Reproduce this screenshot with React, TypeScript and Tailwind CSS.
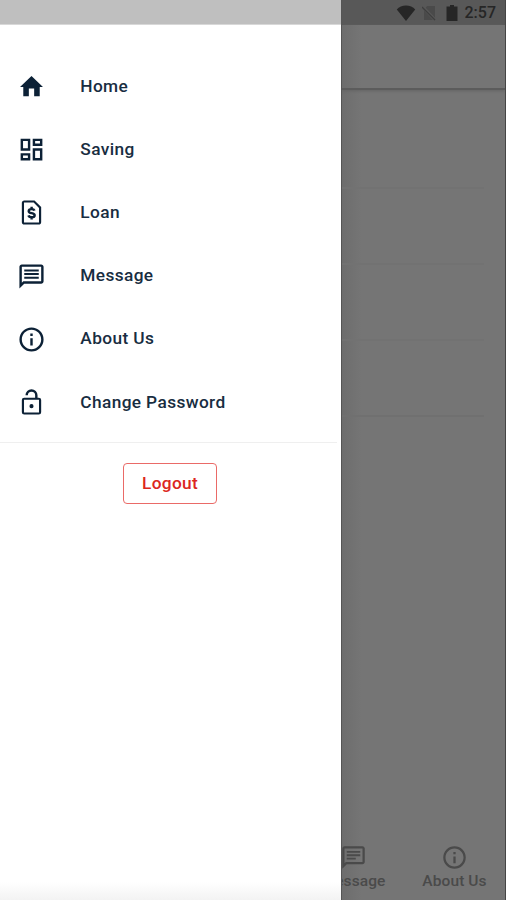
import type { ReactNode } from "react";

function Icon({ children, className }: { children: ReactNode; className: string }) {
  return (
    <svg viewBox="0 0 24 24" fill="currentColor" className={className}>
      {children}
    </svg>
  );
}

const home = <path d="M9.800 20v-6.300h4.400V20h4.600v-7.500h2.700L12 3.300l-9.500 9.200h2.700V20z" />;
const dashboard = (
  <path d="M19 5v2h-4V5h4M9 5v6H5V5h4m10 8v6h-4v-6h4M9 17v2H5v-2h4M21 3h-8v6h8V3M11 3H3v10h8V3m10 8h-8v10h8V11m-10 4H3v6h8v-6z" />
);
const loan = (
  <>
    <path d="M14.500 2H6c-1.100 0-2 .9-2 2v16c0 1.100.9 2 2 2h12c1.100 0 2-.9 2-2V7.500L14.500 2zM18.200 20.200H5.800V3.800h8L18.200 8.300v11.900z" />
    <path
      d="M14.500 10.500c-.3-.9-1.200-1.300-2.400-1.300-1.400 0-2.400.6-2.400 1.700 0 2.300 4.900 1 4.900 3.300 0 1.100-1 1.700-2.500 1.700-1.300 0-2.300-.5-2.600-1.500M12.100 7.300v1.900m0 6.600v1.900"
      fill="none"
      stroke="currentColor"
      strokeWidth="2"
    />
  </>
);
const message = (
  <path d="M20 2H4c-1.100 0-2 .9-2 2v18l4-4h14c1.100 0 2-.9 2-2V4c0-1.100-.9-2-2-2zm0 14H5.200L4 17.200V4h16v12zM6 12.200h12v1.600H6v-1.600zm0-3h12v1.600H6V9.200zm0-3h12v1.600H6V6.200z" />
);
const chat = (
  <path d="M20 2H4c-1.100 0-2 .9-2 2v18l4-4h14c1.100 0 2-.9 2-2V4c0-1.100-.9-2-2-2zm0 14H5.200L4 17.200V4h16v12zM6 12.200h8v1.600H6v-1.600zm0-3h12v1.600H6V9.200zm0-3h12v1.600H6V6.200z" />
);
const info = (
  <path d="M11 9h2V7h-2v2m1 11c-4.410 0-8-3.590-8-8s3.590-8 8-8 8 3.590 8 8-3.590 8-8 8m0-18a10 10 0 1 0 0 20 10 10 0 0 0 0-20m-1 15h2v-6h-2v6z" />
);
const unlock = (
  <path d="M18.200 20.200V9.800H5.800v10.400h12.400M18 8a2 2 0 0 1 2 2v10a2 2 0 0 1-2 2H6a2 2 0 0 1-2-2V10a2 2 0 0 1 2-2h9V6a3 3 0 0 0-6 0H7a5 5 0 0 1 10 0v2h1m-6 8.700a1.700 1.700 0 1 1 0-3.400 1.700 1.700 0 0 1 0 3.400z" />
);

const items = [
  { label: "Home", icon: home },
  { label: "Saving", icon: dashboard },
  { label: "Loan", icon: loan },
  { label: "Message", icon: message },
  { label: "About Us", icon: info },
  { label: "Change Password", icon: unlock },
];

function Drawer() {
  return (
    <aside className="flex w-[341px] shrink-0 flex-col bg-linear-to-b from-white from-98% to-[#f3f3f3]">
      <div className="h-[25px] border-b border-[#d8d8d8] bg-[#bfbfbf]" />
      <nav className="mt-[30px] text-[#0c2136]">
        {items.map((item) => (
          <a key={item.label} className="flex h-[63.200px] items-center pl-[17.300px]">
            <Icon className="size-[29px]">{item.icon}</Icon>
            <span className="ml-[34px] text-[17.300px] font-medium tracking-[.38px] text-[#182d41]">{item.label}</span>
          </a>
        ))}
      </nav>
      <div className="mt-[8px] mr-1 h-px bg-[#efefef]" />
      <button className="mt-5 ml-[123px] h-[41px] w-[94px] rounded-[4px] border-[1.500px] border-[#ea6a67] text-[17.300px] font-medium tracking-[.3px] text-[#dc2620]">
        Logout
      </button>
    </aside>
  );
}

function StatusBar() {
  return (
    <div className="flex h-[25px] items-center justify-end bg-[#585858] pr-[9px] text-[#262626]">
      <svg viewBox="0 0 20 16" fill="currentColor" className="h-[16px] w-[20px]">
        <path d="M10 16 .8 4.500C3 1.800 6.300.5 10 .5s7 1.300 9.200 4z" />
      </svg>
      <svg viewBox="0 0 14 16" className="ml-[6px] h-[16px] w-[14px]">
        <path d="M5 1h8v14H2V5z" fill="#4a4a4a" />
        <path d="m1 2 12 13" stroke="#585858" strokeWidth="3" />
        <path d="m0 2 13 13" stroke="#3e3e3e" strokeWidth="1.300" />
      </svg>
      <svg viewBox="0 0 12 16" fill="currentColor" className="ml-[10px] h-[16px] w-[12px]">
        <path d="M4 0h4v1.500h3.500V16H.5V1.500H4z" />
      </svg>
      <span className="ml-[7px] pt-px text-[16px] font-medium">2:57</span>
    </div>
  );
}

function Tab({ label, icon }: { label: string; icon: ReactNode }) {
  return (
    <div className="flex w-[101px] shrink-0 flex-col items-center">
      <Icon className="size-[27px]">{icon}</Icon>
      <span className="pt-px text-[15.500px] leading-[18px] font-medium tracking-[.1px] whitespace-nowrap">{label}</span>
    </div>
  );
}

export default function App() {
  return (
    <div className="flex h-[900px] w-[506px] overflow-hidden bg-white font-['Roboto',sans-serif]">
      <Drawer />
      <main className="flex min-w-0 flex-1 flex-col overflow-hidden border-r border-l border-r-[#454545] border-l-[#555555] bg-linear-to-r from-[#6d6d6d] to-[#757575] to-12%">
        <StatusBar />
        <div className="h-[65px] border-b-2 border-[#5c5c5c] shadow-[0_1px_3px_#646464]" />
        <div className="mr-[21px] flex-1">
          <div className="h-[99px] border-b-2 border-[#727272]" />
          <div className="h-[76px] border-b-2 border-[#727272]" />
          <div className="h-[76px] border-b-2 border-[#727272]" />
          <div className="h-[76px] border-b-2 border-[#707070]" />
        </div>
        <div className="flex h-[56px] justify-end text-[#4a4a4a]">
          <Tab label="Message" icon={chat} />
          <Tab label="About Us" icon={info} />
        </div>
      </main>
    </div>
  );
}
